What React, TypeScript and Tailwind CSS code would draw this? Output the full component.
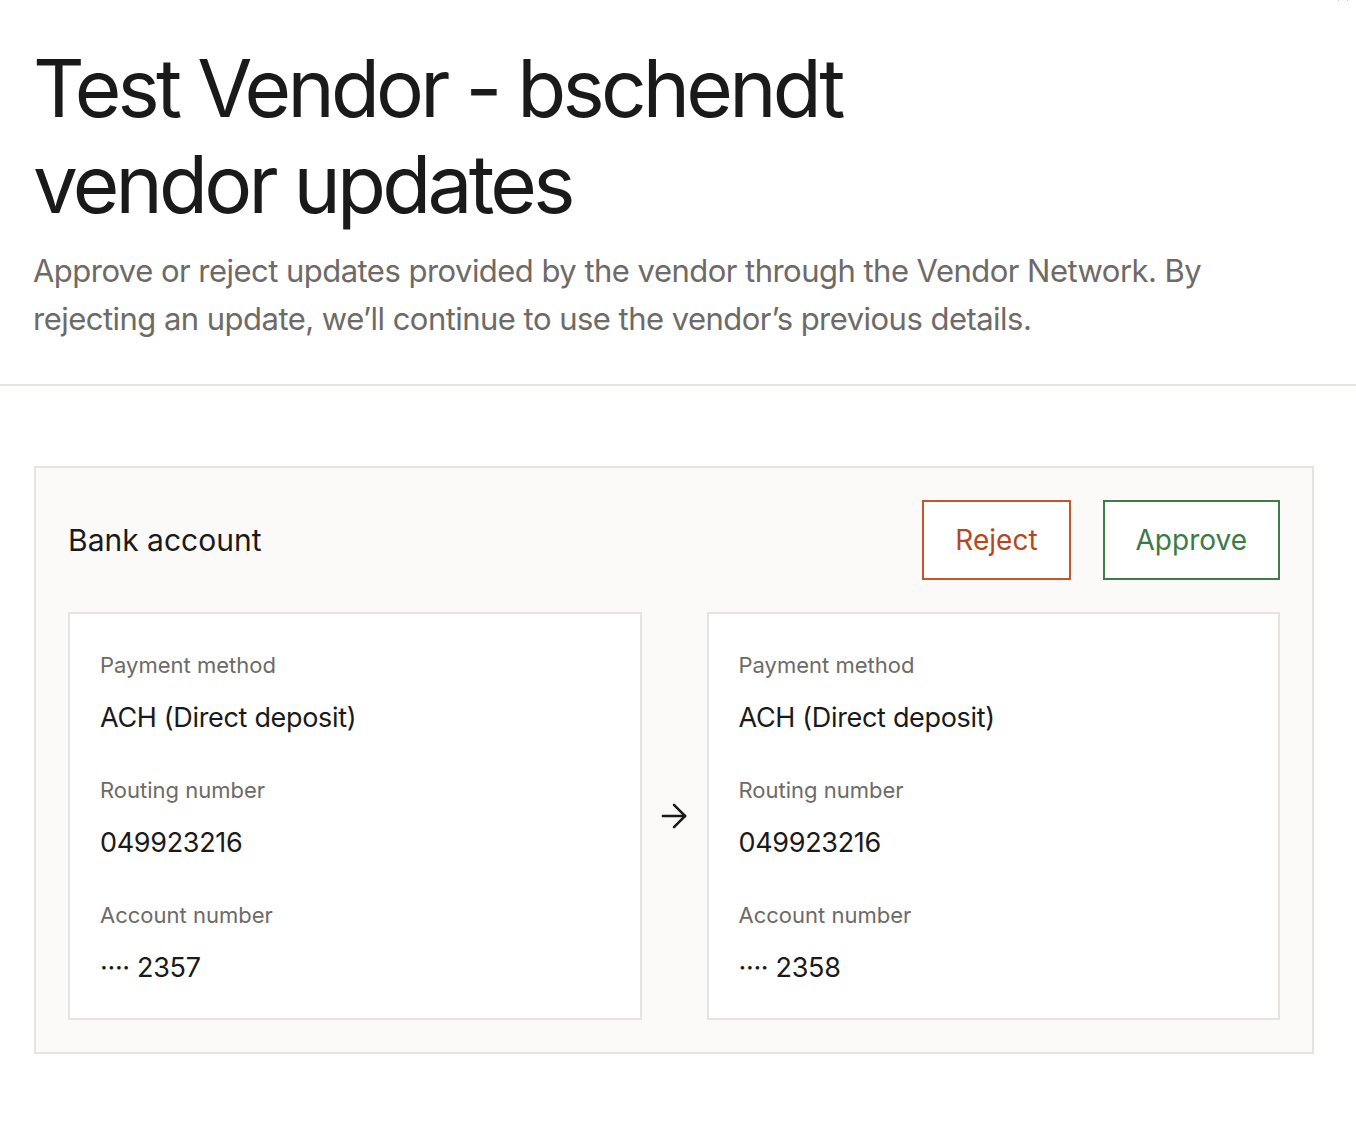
import { ArrowRight, X } from "lucide-react";

interface Field {
  label: string;
  value: string;
}

const before: Field[] = [
  { label: "Payment method", value: "ACH (Direct deposit)" },
  { label: "Routing number", value: "049923216" },
  { label: "Account number", value: "···· 2357" },
];

const after: Field[] = [
  { label: "Payment method", value: "ACH (Direct deposit)" },
  { label: "Routing number", value: "049923216" },
  { label: "Account number", value: "···· 2358" },
];

function DetailCard({ fields }: { fields: Field[] }) {
  return (
    <div className="bg-white border-2 border-[#e7e4e0] px-[30px] pt-[35px] pb-[30px]">
      {fields.map((f, i) => (
        <div key={f.label} className={i > 0 ? "mt-[36px]" : ""}>
          <div className="text-[22px] leading-[32px] text-[#6d6a67]">{f.label}</div>
          <div className="mt-[17px] text-[27px] leading-[40px] tracking-[-0.012em] text-[#1a1a1a]">
            {f.value}
          </div>
        </div>
      ))}
    </div>
  );
}

export default function App() {
  return (
    <div className="relative min-h-screen bg-white overflow-hidden font-['Inter',sans-serif]">
      {/* close button, mostly scrolled out of view */}
      <button className="absolute -top-[14px] right-[4px] text-[#1a1a1a]">
        <X size={18} strokeWidth={2} />
      </button>

      {/* header */}
      <div className="px-[33px] pt-10 pb-[41px]">
        <h1 className="max-w-[900px] text-[80px] leading-[96px] tracking-[-0.047em] text-[#1a1a1a]">
          Test Vendor - bschendt vendor updates
        </h1>
        <p className="mt-[15px] text-[31px] leading-[48px] tracking-[-0.017em] text-[#6d6a67]">
          Approve or reject updates provided by the vendor through the Vendor Network. By rejecting an
          update, we’ll continue to use the vendor’s previous details.
        </p>
      </div>
      <div className="h-[2px] bg-[#e7e4e0]" />

      {/* bank account update */}
      <div className="px-[34px] pt-20">
        <section className="w-[1280px] border-2 border-[#e7e4e0] bg-[#fbfaf8] p-8">
          <div className="flex items-center justify-between mb-8">
            <h2 className="text-[30px] leading-[40px] text-[#1a1a1a]">Bank account</h2>
            <div className="flex gap-8">
              <button className="h-[80px] px-[31px] border-2 border-[#c4562c] bg-white text-[28px] text-[#b5471f]">
                Reject
              </button>
              <button className="h-[80px] px-[31px] border-2 border-[#3e7d46] bg-white text-[28px] text-[#3b7a45]">
                Approve
              </button>
            </div>
          </div>
          <div className="grid grid-cols-[1fr_65px_1fr] items-center">
            <DetailCard fields={before} />
            <div className="flex justify-center text-[#1a1a1a]">
              <ArrowRight size={38} strokeWidth={1.6} />
            </div>
            <DetailCard fields={after} />
          </div>
        </section>
      </div>
    </div>
  );
}
